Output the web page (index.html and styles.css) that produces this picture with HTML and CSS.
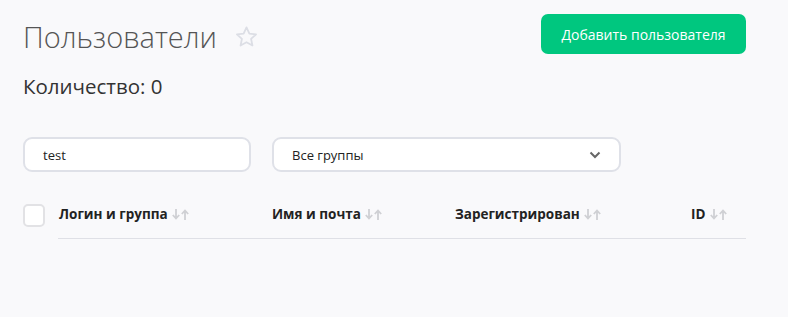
FILE: index.html
```html
<!DOCTYPE html>
<html lang="ru">
<head>
  <meta charset="UTF-8">
  <title>Пользователи</title>
  <link rel="stylesheet" href="styles.css">
</head>
<body>
  <div class="page">
    <div class="head">
      <div class="title-block">
        <h1>Пользователи
          <svg class="star" width="23" height="21" viewBox="0 0 24 22"><path d="M12 1.5l3 6.4 7 .8-5.2 4.8 1.4 6.9L12 17l-6.2 3.4 1.4-6.9L2 8.7l7-.8z" fill="none" stroke="#dcdee5" stroke-width="1.9" stroke-linejoin="round"/></svg>
        </h1>
        <div class="count">Количество: 0</div>
      </div>
      <button class="btn-add">Добавить пользователя</button>
    </div>

    <div class="filters">
      <div class="field search">test</div>
      <div class="field select">
        <span>Все группы</span>
        <svg width="12" height="8" viewBox="0 0 12 8"><path d="M1.5 1.5l4.5 4.5 4.5-4.5" fill="none" stroke="#666" stroke-width="2"/></svg>
      </div>
    </div>

    <div class="table-head">
      <div class="checkbox"></div>
      <div class="cols">
        <div class="col c1">Логин и группа <svg class="sort" width="18" height="11" viewBox="0 0 18 11"><path d="M4 0v9M0.8 6l3.2 3.5L7.2 6M13 11V2M9.8 5L13 1.5 16.2 5" fill="none" stroke="#cfd0d4" stroke-width="1.8"/></svg></div>
        <div class="col c2">Имя и почта <svg class="sort" width="18" height="11" viewBox="0 0 18 11"><path d="M4 0v9M0.8 6l3.2 3.5L7.2 6M13 11V2M9.8 5L13 1.5 16.2 5" fill="none" stroke="#cfd0d4" stroke-width="1.8"/></svg></div>
        <div class="col c3">Зарегистрирован <svg class="sort" width="18" height="11" viewBox="0 0 18 11"><path d="M4 0v9M0.8 6l3.2 3.5L7.2 6M13 11V2M9.8 5L13 1.5 16.2 5" fill="none" stroke="#cfd0d4" stroke-width="1.8"/></svg></div>
        <div class="col c4">ID <svg class="sort" width="18" height="11" viewBox="0 0 18 11"><path d="M4 0v9M0.8 6l3.2 3.5L7.2 6M13 11V2M9.8 5L13 1.5 16.2 5" fill="none" stroke="#cfd0d4" stroke-width="1.8"/></svg></div>
      </div>
    </div>
  </div>
</body>
</html>
```

FILE: styles.css
```css
* {
  box-sizing: border-box;
  margin: 0;
  padding: 0;
}

body {
  background: #f9f9fb;
  font-family: 'Open Sans', sans-serif;
  color: #333;
}

.page {
  width: 746px;
  padding: 14px 0 0 23px;
}

.head {
  display: flex;
  justify-content: space-between;
  align-items: flex-start;
}

h1 {
  font-weight: 300;
  font-size: 29px;
  color: #555;
  line-height: 40px;
  margin-top: 3px;
  display: flex;
  align-items: center;
}

.star {
  margin-left: 18px;
  margin-top: -2px;
}

.count {
  font-size: 20.5px;
  margin-top: 15px;
  color: #333;
}

.btn-add {
  background: #00c77f;
  color: #fff;
  border: none;
  border-radius: 7px;
  height: 40px;
  width: 205px;
  font-family: 'Open Sans', sans-serif;
  font-size: 14px;
}

.filters {
  display: flex;
  gap: 21px;
  margin-top: 37px;
}

.field {
  height: 35px;
  background: #fff;
  border: 2px solid #dfe1e8;
  border-radius: 9px;
  font-size: 13px;
  padding: 0 18px;
  display: flex;
  align-items: center;
  color: #222;
}

.search {
  width: 228px;
}

.select {
  width: 349px;
  justify-content: space-between;
}

.table-head {
  display: flex;
  margin-top: 32px;
}

.checkbox {
  width: 22px;
  height: 23px;
  background: #fff;
  border: 2px solid #e2e2e5;
  border-radius: 5px;
  flex: none;
}

.cols {
  display: flex;
  margin-left: 13px;
  width: 688px;
  height: 35px;
  border-bottom: 1px solid #dfe0e6;
  padding-top: 1px;
}

.col {
  font-size: 13.5px;
  font-weight: 700;
  color: #222;
  padding-left: 1px;
}

.sort {
  vertical-align: -1px;
  margin-left: 1px;
}

.c1 { width: 213px; }
.c2 { width: 183px; }
.c3 { width: 236px; }
```
